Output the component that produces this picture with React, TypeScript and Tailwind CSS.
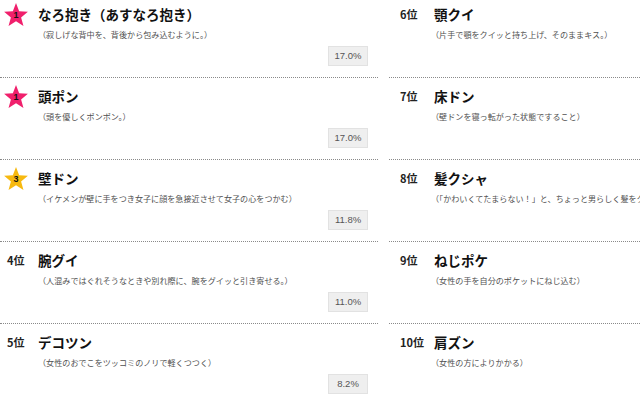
import React from "react";

type Item = {
  rank: number;
  title: string;
  desc: string;
  pct?: string;
};

const left: Item[] = [
  { rank: 1, title: "なろ抱き（あすなろ抱き）", desc: "（寂しげな背中を、背後から包み込むように。）", pct: "17.0%" },
  { rank: 1, title: "頭ポン", desc: "（頭を優しくポンポン。）", pct: "17.0%" },
  { rank: 3, title: "壁ドン", desc: "（イケメンが壁に手をつき女子に顔を急接近させて女子の心をつかむ）", pct: "11.8%" },
  { rank: 4, title: "腕グイ", desc: "（人混みではぐれそうなときや別れ際に、腕をグイッと引き寄せる。）", pct: "11.0%" },
  { rank: 5, title: "デコツン", desc: "（女性のおでこをツッコミのノリで軽くつつく）", pct: "8.2%" },
];

const right: Item[] = [
  { rank: 6, title: "顎クイ", desc: "（片手で顎をクイッと持ち上げ、そのままキス。）" },
  { rank: 7, title: "床ドン", desc: "（壁ドンを寝っ転がった状態ですること）" },
  { rank: 8, title: "髪クシャ", desc: "（「かわいくてたまらない！」と、ちょっと男らしく髪をクシャッとする）" },
  { rank: 9, title: "ねじポケ", desc: "（女性の手を自分のポケットにねじ込む）" },
  { rank: 10, title: "肩ズン", desc: "（女性の方によりかかる）" },
];

function Star({ n, color }: { n: number; color: string }) {
  return (
    <div className="relative w-[26px] h-[26px] shrink-0">
      <svg viewBox="0 0 24 24" width="26" height="26" className="block">
        <polygon
          points="12,1 14.9,8.6 23,9 16.7,14.2 18.9,22.2 12,17.7 5.1,22.2 7.3,14.2 1,9 9.1,8.6"
          fill={color}
        />
      </svg>
      <span className="absolute inset-0 flex items-center justify-center pt-[2px] text-[9px] font-bold leading-none text-[#111] [font-family:'Liberation_Sans',sans-serif]">
        {n}
      </span>
    </div>
  );
}

function LeftRow({ item }: { item: Item }) {
  const isStar = item.rank <= 3;
  return (
    <div className="flex flex-col h-[82px] pt-[10px] border-b border-dotted border-[#8a8a8a]">
      <div className="flex items-center h-[16px]">
        <div className="w-[38px] shrink-0 flex items-center">
          {isStar ? (
            <div className="pl-[3px] pt-[1px]">
              <Star n={item.rank} color={item.rank === 3 ? "#f7b90f" : "#f0206c"} />
            </div>
          ) : (
            <span className="pl-[7px] text-[11px] font-bold text-[#222]">
              {item.rank}位
            </span>
          )}
        </div>
        <span className="text-[13.5px] font-bold text-[#111] whitespace-nowrap leading-[16px]">
          {item.title}
        </span>
      </div>
      <div className="mt-[7px] h-[12px] pl-[38px] text-[8.1px] leading-[12px] text-[#505050] whitespace-nowrap">
        {item.desc}
      </div>
      <div className="mt-[5px] self-end mr-[10px] w-[40px] h-[20px] flex items-center justify-center bg-[#efefef] border border-[#e2e2e2] text-[9.5px] text-[#555] [font-family:'Liberation_Sans',sans-serif]">
        {item.pct}
      </div>
    </div>
  );
}

function RightRow({ item }: { item: Item }) {
  return (
    <div className="flex flex-col h-[82px] pt-[10px] border-b border-dotted border-[#8a8a8a]">
      <div className="flex items-center h-[16px] pl-[11px]">
        <span className="w-[34px] shrink-0 text-[11px] font-bold text-[#222] whitespace-nowrap">
          {item.rank}位
        </span>
        <span className="text-[13.5px] font-bold text-[#111] whitespace-nowrap leading-[16px]">
          {item.title}
        </span>
      </div>
      <div className="mt-[7px] h-[12px] pl-[42px] text-[8.1px] leading-[12px] text-[#505050] whitespace-nowrap">
        {item.desc}
      </div>
    </div>
  );
}

export default function App() {
  return (
    <div className="w-[640px] h-[400px] overflow-hidden bg-white [font-family:'Noto_Sans_CJK_JP',sans-serif]">
      <div className="-mt-[4px] flex gap-[11px]">
        <div className="w-[378px] shrink-0 flex flex-col">
          {left.map((it, i) => (
            <LeftRow key={i} item={it} />
          ))}
        </div>
        <div className="flex-1 min-w-0 overflow-hidden flex flex-col">
          {right.map((it, i) => (
            <RightRow key={i} item={it} />
          ))}
        </div>
      </div>
    </div>
  );
}
